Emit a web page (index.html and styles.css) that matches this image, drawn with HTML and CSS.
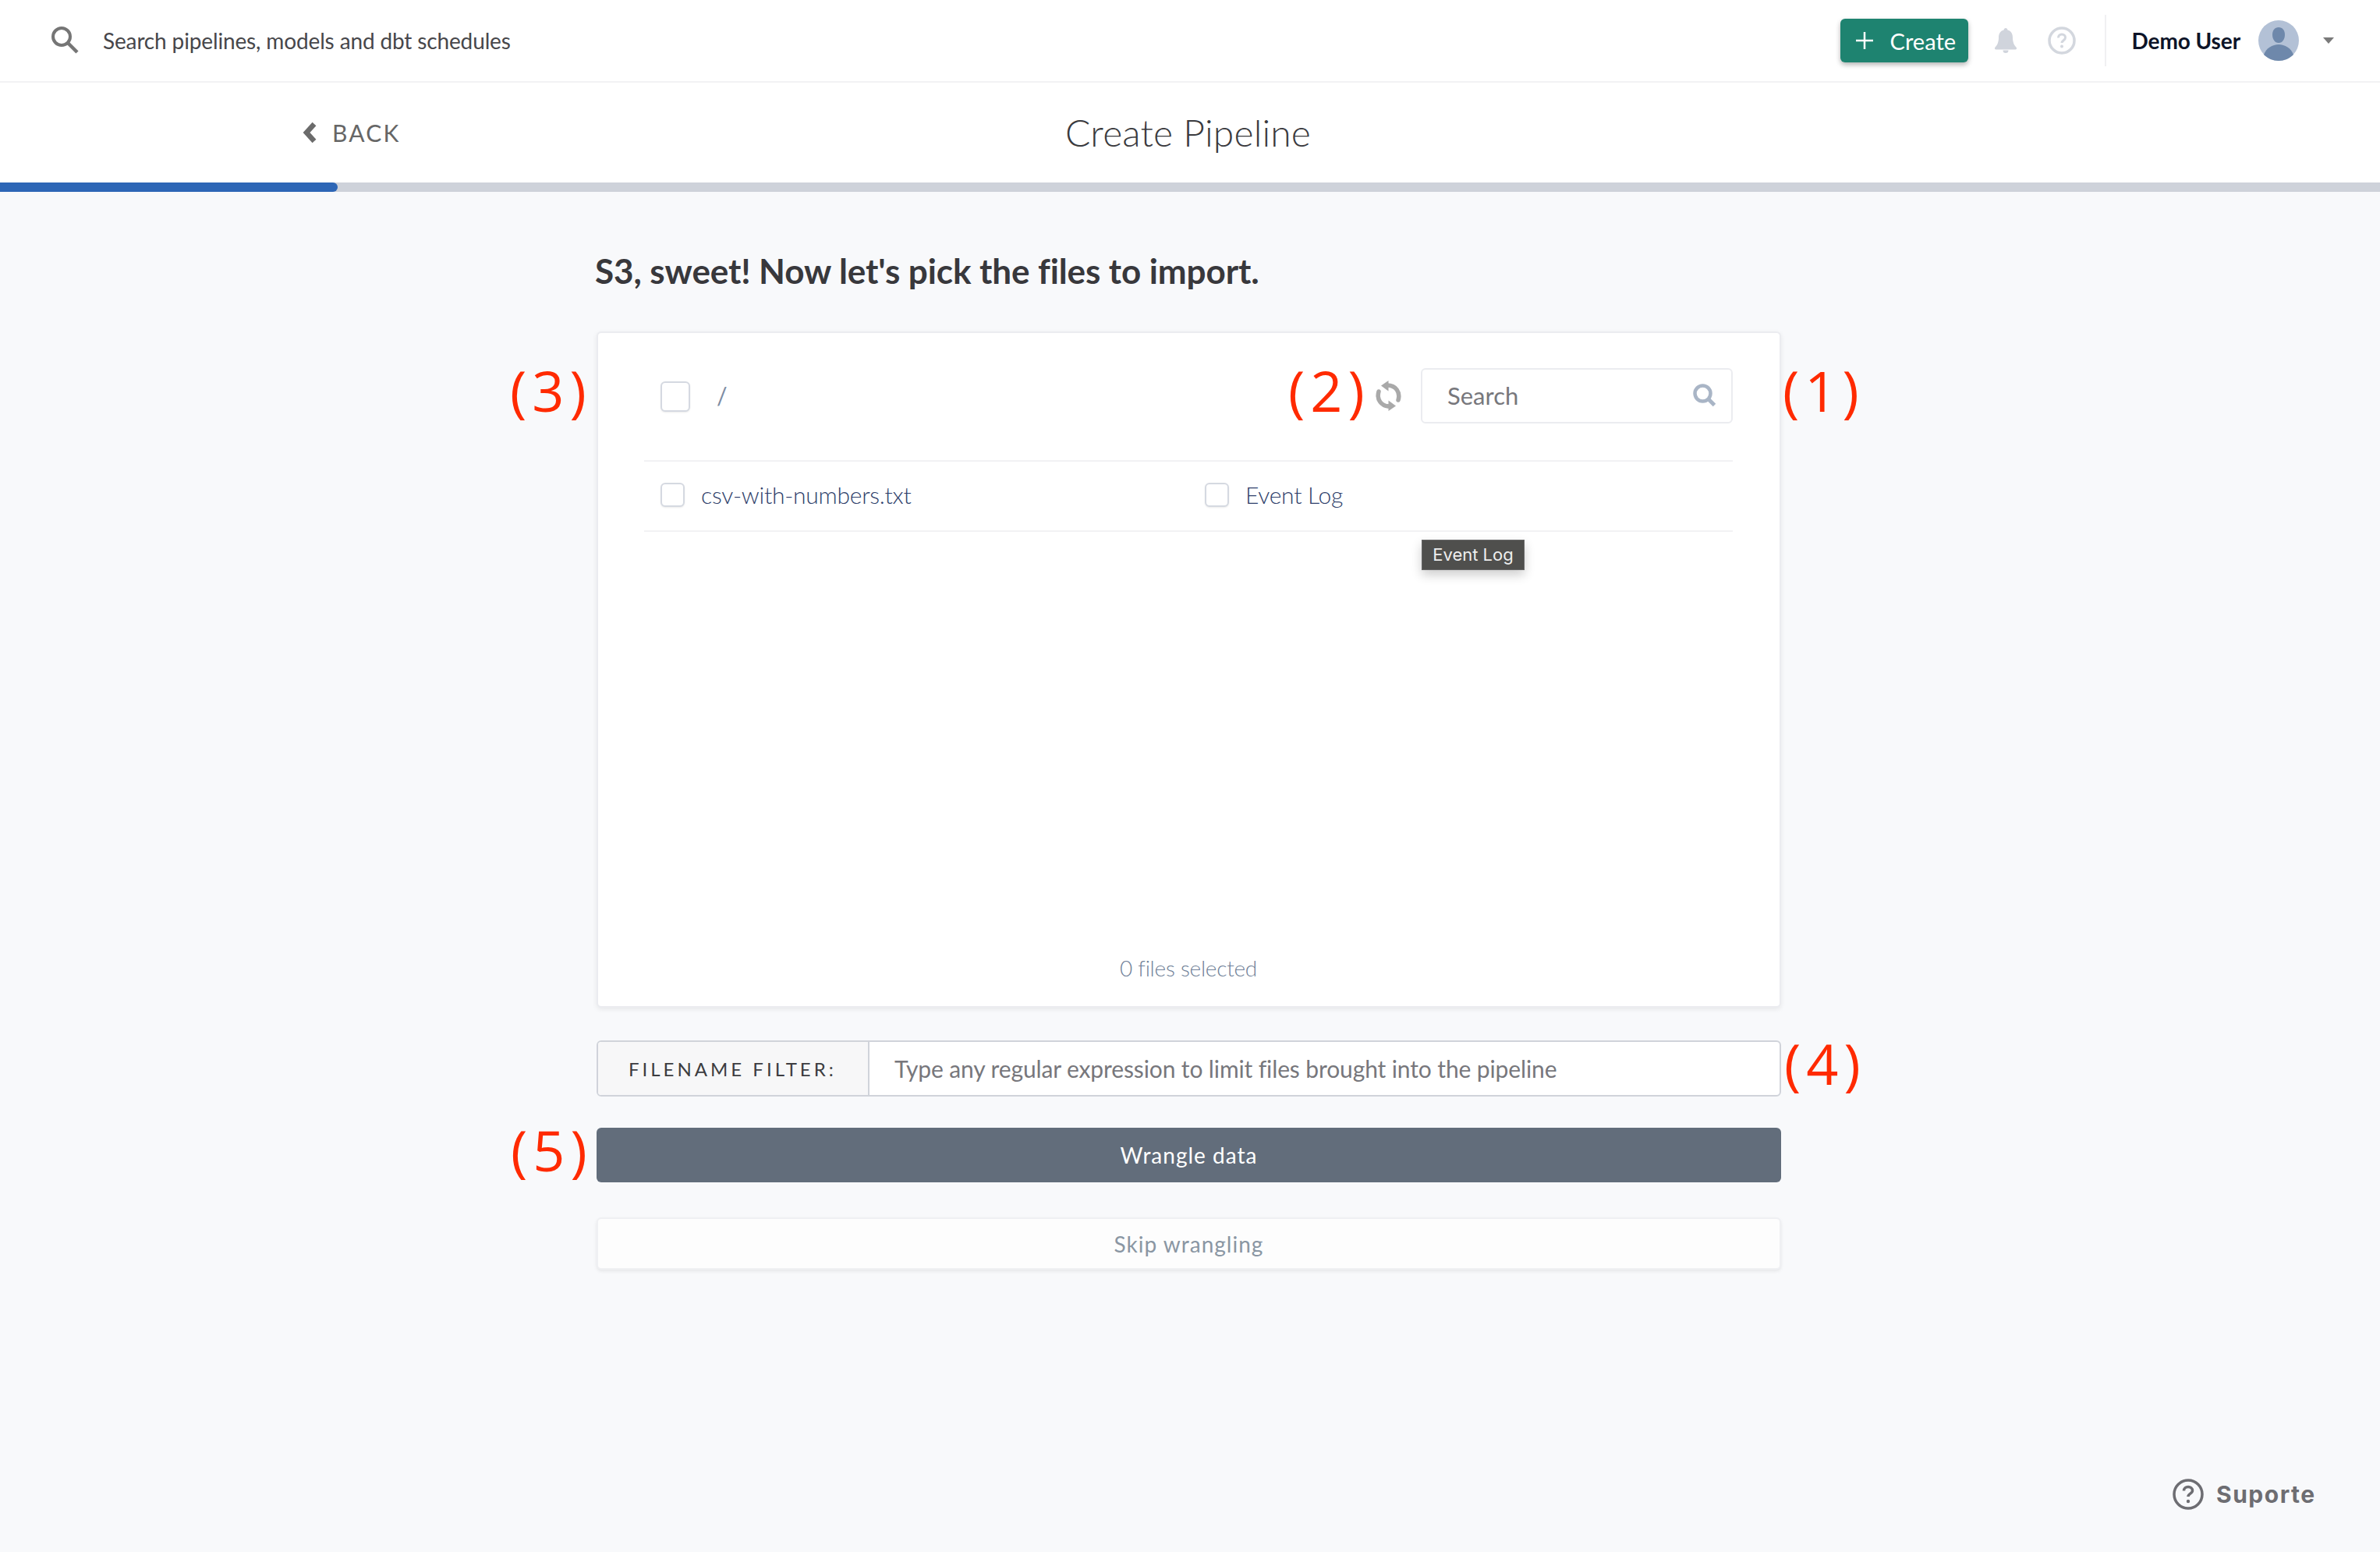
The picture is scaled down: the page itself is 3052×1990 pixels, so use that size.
FILE: index.html
```html
<!DOCTYPE html>
<html lang="en">
<head>
    <meta charset="UTF-8">
    <meta name="viewport" content="width=device-width, initial-scale=1.0">
    <title>Create Pipeline</title>
    <link rel="stylesheet" href="styles.css">
</head>
<body>

    <!-- Top bar -->
    <header class="topbar">
        <div class="global-search">
            <svg class="global-search-icon" viewBox="0 0 36 36" aria-hidden="true">
                <circle cx="14" cy="14" r="11" fill="none" stroke="#757575" stroke-width="4"/>
                <path d="M22 22l12 12" fill="none" stroke="#757575" stroke-width="4.5"/>
            </svg>
            <span>Search pipelines, models and dbt schedules</span>
        </div>
        <div class="topbar-actions">
            <button class="create-btn">
                <svg class="create-plus" viewBox="0 0 24 22" aria-hidden="true">
                    <path d="M12 0v22M1 11h22" fill="none" stroke="#fff" stroke-width="2.500"/>
                </svg>
                Create
            </button>
            <svg class="bell-icon" viewBox="0 0 30 32" aria-hidden="true">
                <path d="M15 0c1.400 0 2.400 1 2.400 2.600 4.600 1.200 6.600 5 6.600 9.400 0 6 1.600 9.600 4.600 12.800 1 1.200.4 2.800-1.200 2.800H2.600C1 27.600.4 26 1.400 24.800 4.400 21.600 6 18 6 12c0-4.400 2-8.200 6.600-9.400C12.600 1 13.600 0 15 0z" fill="#d0d4dc"/>
                <path d="M11.500 28.500a3.500 3.500 0 0 0 7 0z" fill="#d0d4dc"/>
            </svg>
            <svg class="help-icon" viewBox="0 0 36 36" aria-hidden="true">
                <circle cx="18" cy="18" r="16" fill="none" stroke="#d3d7de" stroke-width="3.500"/>
                <path d="M13.500 14.500c0-2.800 2-4.500 4.500-4.500s4.500 1.700 4.500 4.200c0 3.500-4.500 3.500-4.500 6.800" fill="none" stroke="#d3d7de" stroke-width="3"/>
                <circle cx="18" cy="25.500" r="2" fill="#d3d7de"/>
            </svg>
            <div class="topbar-divider"></div>
            <span class="user-name">Demo User</span>
            <svg class="avatar" viewBox="0 0 52 52" aria-hidden="true">
                <circle cx="26" cy="26" r="26" fill="#b3c1d6"/>
                <path d="M26 9c5 0 8 4 8 9.500S31 29 26 29s-8-5-8-10.500S21 9 26 9z" fill="#6e88ab"/>
                <path d="M7 44c3-8 11-13 19-13s16 5 19 13c-5 5-12 8-19 8S12 49 7 44z" fill="#6e88ab"/>
            </svg>
            <span class="user-caret"></span>
        </div>
    </header>

    <!-- Wizard title and progress -->
    <div class="wizard-bar">
        <a class="back-link">
            <svg class="back-icon" viewBox="0 0 20 28" aria-hidden="true">
                <path d="M15 3L5 14l10 11" fill="none" stroke="#6b6b6b" stroke-width="6.500"/>
            </svg>
            BACK
        </a>
        <h1 class="wizard-title">Create Pipeline</h1>
    </div>
    <div class="progress"><div class="progress-fill"></div></div>

    <main class="content">
        <h2 class="page-heading">S3, sweet! Now let's pick the files to import.</h2>

        <section class="file-card">
            <div class="file-toolbar">
                <span class="checkbox checkbox-lg"></span>
                <span class="path">/</span>
                <svg class="refresh-icon" viewBox="0 0 33 39" aria-hidden="true">
                    <path d="M29 25C32 15 26 6 15 6" fill="none" stroke="#a9a9a9" stroke-width="5.500" stroke-linecap="round"/>
                    <path d="M7 6.500L16.500 0v13.500z" fill="#a9a9a9"/>
                    <path d="M4 14C1 24 7 33 18 33" fill="none" stroke="#a9a9a9" stroke-width="5.500" stroke-linecap="round"/>
                    <path d="M26 32.500L16.500 39V25.500z" fill="#a9a9a9"/>
                </svg>
                <div class="file-search">
                    <span>Search</span>
                    <svg class="file-search-icon" viewBox="0 0 30 30" aria-hidden="true">
                        <circle cx="12.500" cy="12.500" r="10" fill="none" stroke="#a9b5c6" stroke-width="4.500"/>
                        <path d="M19.500 19.500l8 8" fill="none" stroke="#a9b5c6" stroke-width="5"/>
                    </svg>
                </div>
            </div>

            <div class="file-list">
                <label class="file-item"><span class="checkbox"></span>csv-with-numbers.txt</label>
                <label class="file-item"><span class="checkbox"></span>Event Log</label>
            </div>

            <div class="tooltip">Event Log</div>
            <p class="file-count">0 files selected</p>
        </section>

        <div class="filter">
            <div class="filter-label">FILENAME FILTER:</div>
            <div class="filter-input">Type any regular expression to limit files brought into the pipeline</div>
        </div>

        <button class="btn-primary">Wrangle data</button>
        <button class="btn-skip">Skip wrangling</button>

        <!-- Red callouts painted on the screenshot -->
        <span class="callout callout-1">(1)</span>
        <span class="callout callout-2">(2)</span>
        <span class="callout callout-3">(3)</span>
        <span class="callout callout-4">(4)</span>
        <span class="callout callout-5">(5)</span>
    </main>

    <div class="support">
        <svg class="support-icon" viewBox="0 0 40 40" aria-hidden="true">
            <circle cx="20" cy="20" r="18" fill="none" stroke="#6d6d72" stroke-width="3.500"/>
            <path d="M14.500 15.500c0-3 2.400-5 5.500-5s5.500 2 5.500 4.800c0 4-5.500 3.700-5.500 7.700" fill="none" stroke="#6d6d72" stroke-width="3.500"/>
            <circle cx="20" cy="29" r="2.200" fill="#6d6d72"/>
        </svg>
        Suporte
    </div>

</body>
</html>
```

FILE: styles.css
```css
* {
    box-sizing: border-box;
}

html, body {
    margin: 0;
    height: 100%;
}

body {
    min-height: 1990px;
    overflow: hidden;
    background-color: #f8f9fb;
    font-family: "Lato", sans-serif;
    position: relative;
}

.topbar {
    height: 106px;
    display: flex;
    align-items: center;
    justify-content: space-between;
    padding: 0 59px 0 65px;
    background-color: #fff;
    border-bottom: 2px solid #f2f2f4;
}

.global-search {
    display: flex;
    align-items: center;
    gap: 31px;
    font-size: 28px;
    letter-spacing: -0.14px;
    color: #47474b;
}

.global-search-icon {
    width: 36px;
    height: 36px;
    margin-top: -2px;
}

.topbar-actions {
    display: flex;
    align-items: center;
}

.create-btn {
    width: 164px;
    height: 56px;
    display: flex;
    align-items: center;
    padding: 0 0 0 19px;
    border: none;
    border-radius: 6px;
    background-color: #1e8370;
    box-shadow: 0 3px 6px rgba(0, 0, 0, 0.3);
    color: #fff;
    font-family: inherit;
    font-size: 29px;
}

.create-plus {
    width: 24px;
    height: 22px;
    margin-right: 21px;
}

.bell-icon {
    width: 30px;
    height: 32px;
    margin-left: 33px;
}

.help-icon {
    width: 36px;
    height: 36px;
    margin-left: 39px;
}

.topbar-divider {
    width: 2px;
    height: 66px;
    margin: 0 33px 0 37px;
    background-color: #f0f0f2;
}

.user-name {
    font-size: 28px;
    font-weight: 700;
    letter-spacing: -0.1px;
    color: #0d1428;
}

.avatar {
    width: 52px;
    height: 52px;
    margin-left: 23px;
}

.user-caret {
    width: 0;
    height: 0;
    margin-left: 31px;
    border-left: 7px solid transparent;
    border-right: 7px solid transparent;
    border-top: 8px solid #7a7a7a;
}

.wizard-bar {
    height: 128px;
    display: flex;
    align-items: center;
    justify-content: center;
    position: relative;
    background-color: #fff;
}

.back-link {
    position: absolute;
    left: 388px;
    top: 50%;
    transform: translateY(-50%);
    display: flex;
    align-items: center;
    gap: 18px;
    font-size: 30px;
    letter-spacing: 2.200px;
    color: #666;
}

.back-icon {
    width: 20px;
    height: 28px;
}

.wizard-title {
    margin: -2px 5px 0 0;
    font-size: 48px;
    font-weight: 300;
    letter-spacing: 0.15px;
    color: #3a3a3e;
}

.progress {
    height: 12px;
    background-color: #ced2da;
}

.progress-fill {
    width: 433px;
    height: 100%;
    border-radius: 0 6px 6px 0;
    background-color: #2d66b6;
}

.content {
    position: relative;
    width: 1519px;
    margin-left: 765px;
}

.page-heading {
    margin: 0 0 0 -2px;
    padding-top: 74px;
    height: 179px;
    font-size: 44px;
    line-height: 54px;
    font-weight: 700;
    letter-spacing: -0.09px;
    color: #38383c;
}

.file-card {
    height: 867px;
    position: relative;
    display: flex;
    flex-direction: column;
    padding: 0 60px 0 59px;
    background-color: #fff;
    border: 2px solid #ebecf0;
    border-radius: 6px;
    box-shadow: 0 2px 6px rgba(0, 0, 0, 0.08);
}

.file-toolbar {
    height: 165px;
    display: flex;
    align-items: center;
    border-bottom: 2px solid #f2f2f4;
    padding: 0 0 3px 21px;
}

.checkbox {
    width: 31px;
    height: 31px;
    flex: none;
    display: block;
    background-color: #fff;
    border: 2px solid #d5d9e1;
    border-radius: 6px;
    box-shadow: 0 1px 2px rgba(0, 0, 0, 0.08);
}

.checkbox-lg {
    width: 38px;
    height: 39px;
    margin-top: 3px;
}

.path {
    margin-left: 34px;
    font-size: 30px;
    color: #7d8ca3;
    flex: 1;
}

.refresh-icon {
    width: 33px;
    height: 39px;
    margin-right: 25px;
}

.file-search {
    width: 400px;
    height: 71px;
    display: flex;
    align-items: center;
    justify-content: space-between;
    padding: 0 19px 0 32px;
    border: 2px solid #ebecf0;
    border-radius: 6px;
    font-size: 31px;
    color: #77777c;
}

.file-search-icon {
    width: 30px;
    height: 30px;
}

.file-list {
    height: 90px;
    display: grid;
    grid-template-columns: 698px 1fr;
    align-items: center;
    padding: 0 0 4px 21px;
    border-bottom: 2px solid #f2f2f4;
}

.file-item {
    display: flex;
    align-items: center;
    gap: 21px;
    font-size: 30px;
    font-weight: 300;
    letter-spacing: -0.25px;
    color: #2f3f6b;
}

.tooltip {
    position: absolute;
    left: 1056px;
    top: 265px;
    width: 132px;
    height: 39px;
    text-align: center;
    line-height: 36px;
    font-family: "Inter", sans-serif;
    font-size: 22px;
    color: #eee;
    background-color: #4f4f4d;
    border: 1px solid #666;
    box-shadow: 0 6px 14px rgba(0, 0, 0, 0.2);
}

.file-count {
    margin: auto 0 32px;
    text-align: center;
    font-size: 28px;
    font-weight: 300;
    letter-spacing: -0.25px;
    color: #6f7f97;
}

.filter {
    height: 72px;
    margin-top: 42px;
    display: flex;
    border: 2px solid #d0d3da;
    border-radius: 6px;
    background-color: #fff;
}

.filter-label {
    width: 348px;
    display: flex;
    align-items: center;
    padding-left: 39px;
    border-right: 2px solid #d0d3da;
    border-radius: 4px 0 0 4px;
    background-color: #f7f7f8;
    font-size: 24px;
    letter-spacing: 4px;
    color: #3c3c40;
}

.filter-input {
    display: flex;
    align-items: center;
    padding-left: 32px;
    font-size: 30px;
    letter-spacing: -0.12px;
    color: #77777c;
}

.btn-primary, .btn-skip {
    width: 100%;
    display: block;
    border-radius: 6px;
    font-family: inherit;
    font-size: 28px;
    letter-spacing: 1px;
}

.btn-primary {
    height: 70px;
    margin-top: 40px;
    border: none;
    background-color: #626d7b;
    color: #fff;
}

.btn-skip {
    height: 67px;
    margin-top: 45px;
    border: 2px solid #eff0f3;
    background-color: #fdfdfd;
    box-shadow: 0 2px 4px rgba(0, 0, 0, 0.08);
    color: #8a96a3;
}

.callout {
    position: absolute;
    font-family: "Open Sans", sans-serif;
    font-size: 72px;
    font-weight: 400;
    line-height: 72px;
    letter-spacing: 7px;
    color: #ff2a00;
}

.callout-1 {
    left: 1521px;
    top: 218px;
}

.callout-2 {
    left: 887px;
    top: 218px;
}

.callout-3 {
    left: -111px;
    top: 218px;
}

.callout-4 {
    left: 1523px;
    top: 1081px;
}

.callout-5 {
    left: -110px;
    top: 1192px;
}

.support {
    position: absolute;
    left: 2786px;
    top: 1896px;
    display: flex;
    align-items: center;
    gap: 16px;
    font-family: "Inter", sans-serif;
    font-size: 30px;
    font-weight: 700;
    letter-spacing: 1.500px;
    color: #6d6d72;
}

.support-icon {
    width: 40px;
    height: 40px;
}
```
